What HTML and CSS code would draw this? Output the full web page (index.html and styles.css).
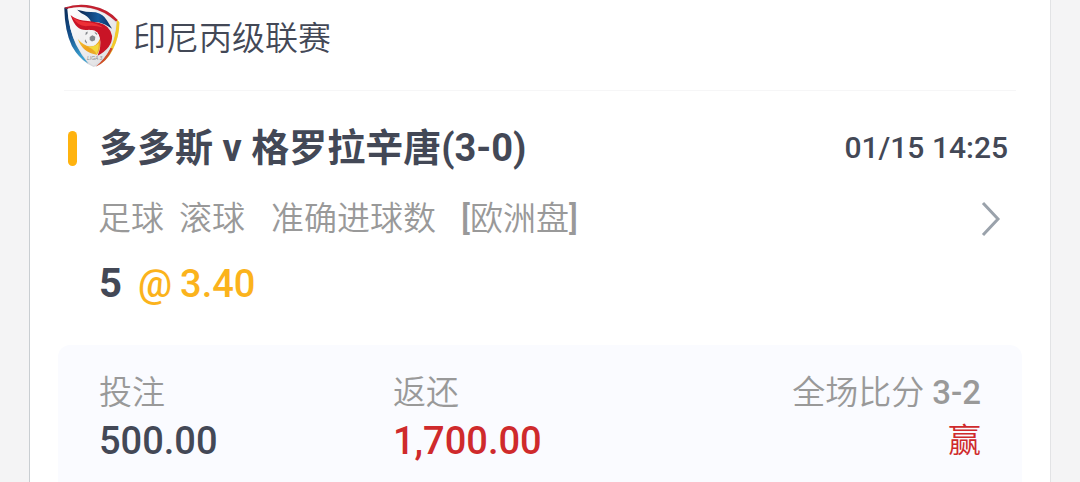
FILE: index.html
```html
<!DOCTYPE html>
<html lang="zh-CN">
<head>
<meta charset="utf-8">
<meta name="viewport" content="width=device-width, initial-scale=1">
<title>注单</title>
<link rel="stylesheet" href="styles.css">
</head>
<body>
<main class="card">
  <header class="league">
    <svg class="league-logo" viewBox="42 14 170 192" role="img" aria-label="LIGA 3">
      <defs>
        <linearGradient id="blue" x1="0" y1="0" x2="0.4" y2="1"><stop offset="0" stop-color="#0b2a55"/><stop offset="0.5" stop-color="#14508c"/><stop offset="1" stop-color="#3aa0d0"/></linearGradient>
        <linearGradient id="wing" x1="0" y1="0" x2="1" y2="0"><stop offset="0" stop-color="#0c2148"/><stop offset="0.6" stop-color="#155a9c"/><stop offset="1" stop-color="#0c2f60"/></linearGradient>
        <linearGradient id="gold" x1="0" y1="0" x2="1" y2="1"><stop offset="0" stop-color="#f6c83a"/><stop offset="0.5" stop-color="#f0a21c"/><stop offset="1" stop-color="#e8b030"/></linearGradient>
        <linearGradient id="face" x1="0" y1="0" x2="1" y2="1"><stop offset="0" stop-color="#ffffff"/><stop offset="1" stop-color="#dcdcdf"/></linearGradient>
      </defs>
      <path fill="#d9dade" d="M43 24Q84 10 128 19Q178 27 210 68Q211 110 190 152Q170 194 132 204Q96 190 68 144Q44 98 43 24Z"/>
      <path fill="url(#blue)" d="M43 24L54 21Q55 86 78 136Q94 168 116 194Q86 176 66 140Q44 94 43 24Z"/>
      <path fill="#c3202f" d="M43 24Q84 10 128 19Q176 28 206 62L200 66Q162 32 122 25Q84 19 48 27Z"/>
      <path fill="#f2c928" d="M203 60L210 68Q211 110 190 152Q176 180 154 194Q184 154 194 118Q201 90 203 60Z"/>
      <path fill="#cf4b2c" d="M190 148Q172 190 138 203Q166 182 182 146Z"/>
      <path fill="url(#face)" d="M52 28Q92 17 130 29Q172 39 200 70Q200 108 181 150Q164 184 132 200Q106 186 82 140Q56 92 52 28Z"/>
      <path fill="url(#wing)" d="M82 30Q108 38 138 38Q162 44 172 62L188 88Q166 72 146 68L124 68Q120 54 105 46Q94 42 82 30Z"/>
      <path fill="#c91426" d="M62 46Q76 59 100 63Q130 66 148 70Q181 77 188 110Q189 146 144 170Q156 142 151 116Q146 94 118 91Q96 95 82 82Q70 70 62 46Z"/>
      <path fill="#ed3037" d="M66 51Q82 66 110 68Q146 70 160 84Q134 77 112 80Q84 82 66 51Z"/>
      <circle cx="126" cy="115" r="23" fill="#f2f2f3"/>
      <path fill="#84888c" d="M120 113L128 108L137 112L136 123L127 127L120 122ZM108 99L114 96L113 103L107 108ZM135 97L143 103L142 107L136 102ZM106 120L112 130L110 133L105 126Z"/>
      <path fill="url(#gold)" d="M84 119Q101 139 120 142Q142 142 151 118Q155 148 142 167Q98 160 84 119Z"/>
      <path fill="#f3d83d" d="M104 139Q128 149 148 131Q148 152 141 166Q134 148 104 139Z"/>
      <text class="logo-text" x="112" y="184">LIGA 3</text>
    </svg>
    <h1 class="league-name">印尼丙级联赛</h1>
  </header>

  <section class="match">
    <div class="match-head">
      <h2 class="teams">多多斯 v 格罗拉辛唐(3-0)</h2>
      <time class="date">01/15 14:25</time>
    </div>
    <div class="market">
      <p class="market-text"><span>足球</span><span>滚球</span><span class="bet-type">准确进球数</span><span class="odds-type"><b>[</b>欧洲盘<b>]</b></span></p>
      <button class="more" type="button" aria-label="详情">
        <svg class="chevron" viewBox="0 0 20 36"><path d="M2 2L17 18L2 34"/></svg>
      </button>
    </div>
    <p class="pick"><strong class="selection">5</strong><span>@</span><span>3.40</span></p>
  </section>

  <section class="summary">
    <dl class="stat"><dt>投注</dt><dd>500.00</dd></dl>
    <dl class="stat"><dt>返还</dt><dd class="red">1,700.00</dd></dl>
    <dl class="stat result"><dt>全场比分 <b>3-2</b></dt><dd class="outcome">赢</dd></dl>
  </section>
</main>
</body>
</html>
```
FILE: styles.css
```css
* { box-sizing: border-box; margin: 0; padding: 0; }

body {
  background: #f4f4f5;
  color: #434856;
  font-family: Roboto, "Noto Sans CJK SC", sans-serif;
  font-size: 32px;
  line-height: 48px;
  overflow: hidden;
}

b { font-weight: 500; }

.card {
  min-height: 100vh;
  margin: 0 29px;
  padding: 0 28px;
  background: #fff;
  border: solid #c9ced2;
  border-width: 0 1px;
  border-right-color: #e2e3e5;
}

.league {
  display: flex;
  align-items: center;
  gap: 13px;
  margin: 0 6px;
  padding: 4px 0 22px;
  border-bottom: 1px solid #f6f6f7;
}
.league-logo { width: 56px; height: 64px; }
.logo-text { font: italic 15px "Liberation Sans", sans-serif; fill: #85878a; }
.league-name { padding-top: 6px; font-size: 33px; font-weight: 350; }

.match { padding: 33px 14px 37px 10px; }
.match-head { display: flex; align-items: center; justify-content: space-between; }
.teams { display: flex; align-items: center; gap: 22px; font-size: 38px; font-weight: 700; white-space: pre; }
.teams::before { content: ""; width: 9px; height: 35px; border-radius: 5px; background: #ffb30f; }
.date { font-size: 30px; font-weight: 500; }

.market {
  display: flex;
  align-items: center;
  justify-content: space-between;
  margin: 23px 0 17px;
  padding: 0 7px 0 30px;
  color: #999;
}
.market-text { display: flex; gap: 15px; font-size: 33px; font-weight: 350; }
.bet-type { padding-left: 11px; }
.odds-type { padding-left: 10px; }
.more { display: flex; background: none; border: 0; cursor: pointer; }
.chevron { width: 20px; height: 36px; fill: none; stroke: #9aa2ab; stroke-width: 3; }

.pick { display: flex; gap: 8px; padding-left: 31px; color: #fbb31c; font-size: 38px; font-weight: 500; }
.selection { margin-right: 8px; color: #434856; font-size: 40px; font-weight: 700; }

.summary {
  display: grid;
  grid-template-columns: 1fr 1fr 1fr;
  padding: 24px 41px;
  border-radius: 12px 12px 0 0;
  background: #fafbff;
}
.stat dt { color: #999; font-size: 33px; font-weight: 350; }
.stat dd { font-size: 38px; font-weight: 500; }
.result { text-align: right; }
.stat .red { color: #cf2a2c; }
.stat .outcome { color: #cf2a2c; font-size: 33px; font-weight: 350; }
```
